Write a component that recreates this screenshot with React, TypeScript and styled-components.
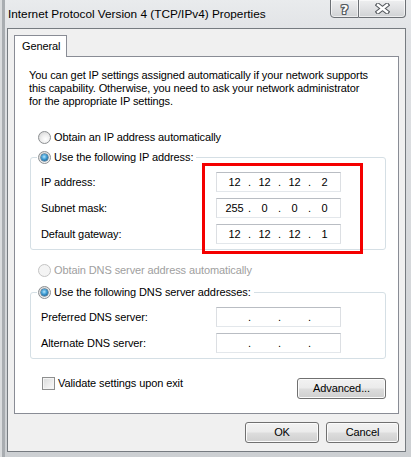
import styled, { createGlobalStyle } from "styled-components";

const GlobalStyle = createGlobalStyle`
  html, body {
    margin: 0;
    padding: 0;
  }
  body {
    font-family: "Liberation Sans", Arial, sans-serif;
    font-size: 11px;
    letter-spacing: -0.1px;
    color: #000;
  }
`;

const Window = styled.div`
  width: 411px;
  height: 457px;
  box-sizing: border-box;
  padding: 0 5px 5px 7px;
  display: flex;
  flex-direction: column;
  background: linear-gradient(180deg, #e9ebed 0px, #dfe1e4 40px, #cdd0d3 100%);
  box-shadow: inset 2px 0 0 #dadcde, inset 5px 0 0 #a9adb1;
  overflow: hidden;
`;

const TitleBar = styled.div`
  height: 28px;
  display: flex;
  align-items: flex-start;
`;

const Title = styled.div`
  padding: 7px 0 0 1px;
  font-size: 11.8px;
  line-height: 15px;
  letter-spacing: 0;
`;

const CaptionButtons = styled.div`
  margin-left: auto;
  margin-top: -1px;
  display: flex;
`;

const CaptionButton = styled.div<{ $close?: boolean }>`
  width: ${(p) => (p.$close ? 47 : 29)}px;
  height: 19px;
  box-sizing: border-box;
  border: 1px solid #6c7075;
  border-left: ${(p) => (p.$close ? "none" : "1px solid #6c7075")};
  border-radius: ${(p) => (p.$close ? "0 0 4px 0" : "0 0 0 4px")};
  background: linear-gradient(180deg, #eeeff0 0%, #e2e3e5 45%, #d0d2d4 100%);
  box-shadow: inset 0 0 0 1px rgba(255, 255, 255, 0.6);
  display: flex;
  align-items: center;
  justify-content: center;
`;

const HelpGlyph = styled.span`
  font-family: "DejaVu Sans", sans-serif;
  font-weight: bold;
  font-size: 13px;
  line-height: 13px;
  color: #fff;
  margin-top: 1px;
  text-shadow: 1px 0 0 #55595e, -1px 0 0 #55595e, 0 1px 0 #55595e, 0 -1px 0 #55595e,
    1px 1px 0 #55595e, -1px -1px 0 #55595e, 1px -1px 0 #55595e, -1px 1px 0 #55595e;
`;

const Client = styled.div`
  flex: 1;
  border: 1px solid #767b80;
  background: #f0f0f0;
  padding: 6px 6px 0 6px;
  display: flex;
  flex-direction: column;
`;

const TabStrip = styled.div`
  display: flex;
`;

const Tab = styled.div`
  height: 22px;
  box-sizing: border-box;
  border: 1px solid #898c95;
  border-bottom: none;
  background: #fff;
  padding: 0 6px 0 7px;
  line-height: 20px;
  margin-bottom: -1px;
  position: relative;
  z-index: 1;
`;

const Panel = styled.div`
  position: relative;
  width: 385px;
  height: 358px;
  box-sizing: border-box;
  border: 1px solid #898c95;
  background: #fff;
  padding: 12px 0 0 14px;
`;

const Intro = styled.p`
  margin: 0;
  line-height: 13px;
`;

const RadioRow = styled.label<{ $disabled?: boolean }>`
  display: flex;
  align-items: center;
  gap: 3px;
  line-height: 15px;
  margin: ${(p) => p.$disabled ? "13px" : "22px"} 0 0 9px;
  color: ${(p) => (p.$disabled ? "#a0a0a0" : "#000")};
`;

const Radio = styled.span<{ $checked?: boolean; $disabled?: boolean }>`
  width: 13px;
  height: 13px;
  box-sizing: border-box;
  border-radius: 50%;
  border: 1px solid ${(p) => (p.$disabled ? "#c4c4c4" : "#8c8f92")};
  background: ${(p) =>
    p.$disabled
      ? "#f4f4f4"
      : "radial-gradient(circle at 60% 65%, #ffffff 0%, #f0f0f0 40%, #cfcfcf 100%)"};
  display: flex;
  align-items: center;
  justify-content: center;
  flex-shrink: 0;
`;

const RadioDot = styled.span`
  width: 7px;
  height: 7px;
  border-radius: 50%;
  background: radial-gradient(circle at 45% 40%, #b6e6fb 0%, #3d9bd4 45%, #154f7a 90%);
  box-shadow: 0 0 0 0.5px #1d4a6b;
`;

const Group = styled.fieldset`
  margin: 5px 0 0 1px;
  width: 356px;
  box-sizing: border-box;
  border: 1px solid #d5dfe5;
  border-radius: 3px;
  padding: 0;
`;

const GroupLegend = styled.legend`
  margin-left: 6px;
  padding: 0 3px 0 1px;
  line-height: 15px;
  display: flex;
  align-items: center;
  gap: 3px;
`;

const FieldRows = styled.div`
  display: grid;
  grid-template-columns: 175px 125px;
  row-gap: 6px;
  align-items: center;
  padding: 7px 0 5px 10px;
`;

const IpField = styled.div`
  width: 125px;
  height: 20px;
  box-sizing: border-box;
  border: 1px solid;
  border-color: #b9bdc3 #dcdfe3 #e3e7eb #dcdfe3;
  background: #fff;
  display: grid;
  grid-template-columns: 27px 3px 27px 3px 27px 3px 27px;
  padding-left: 4px;
  align-items: center;
  text-align: center;
  line-height: 18px;
`;

const Octet = styled.span``;

const Dot = styled.span``;

const Highlight = styled.div`
  position: absolute;
  left: 187px;
  top: 106px;
  width: 161px;
  height: 91px;
  box-sizing: border-box;
  border: 3px solid #f40000;
  pointer-events: none;
`;

const BottomRow = styled.div`
  width: 356px;
  margin: 19px 0 0 1px;
  display: flex;
  justify-content: space-between;
  align-items: flex-start;
`;

const CheckRow = styled.label`
  display: flex;
  align-items: center;
  gap: 3px;
  line-height: 15px;
  margin: -2px 0 0 12px;
`;

const CheckBox = styled.span`
  width: 13px;
  height: 13px;
  box-sizing: border-box;
  border: 1px solid #8e8f8f;
  background: linear-gradient(135deg, #d9dadb 0%, #eeeeee 60%, #fbfbfb 100%);
  box-shadow: inset 0 0 0 1px #f4f4f4;
  flex-shrink: 0;
`;

const Button = styled.div<{ $width: number }>`
  width: ${(p) => p.$width}px;
  height: 21px;
  box-sizing: border-box;
  border: 1px solid #707070;
  border-radius: 3px;
  background: linear-gradient(180deg, #f2f2f2 0%, #ebebeb 48%, #dddddd 52%, #cfcfcf 100%);
  box-shadow: inset 0 0 0 1px #fbfbfb;
  display: flex;
  align-items: center;
  justify-content: center;
  line-height: 15px;
`;

const ButtonBar = styled.div`
  display: flex;
  justify-content: flex-end;
  gap: 7px;
  margin-top: 8px;
  width: 385px;
`;

const IpValue = ({ parts }: { parts: string[] }) => (
  <IpField>
    <Octet>{parts[0]}</Octet>
    <Dot>.</Dot>
    <Octet>{parts[1]}</Octet>
    <Dot>.</Dot>
    <Octet>{parts[2]}</Octet>
    <Dot>.</Dot>
    <Octet>{parts[3]}</Octet>
  </IpField>
);

const empty = ["", "", "", ""];

export default function App() {
  return (
    <>
      <GlobalStyle />
      <Window>
        <TitleBar>
          <Title>Internet Protocol Version 4 (TCP/IPv4) Properties</Title>
          <CaptionButtons>
            <CaptionButton>
              <HelpGlyph>?</HelpGlyph>
            </CaptionButton>
            <CaptionButton $close>
              <svg width="15" height="11" viewBox="0 0 15 11">
                <path d="M3 2 L12 9 M12 2 L3 9" stroke="#55595e" strokeWidth="4.6" strokeLinecap="square" />
                <path d="M3 2 L12 9 M12 2 L3 9" stroke="#fff" strokeWidth="2.4" strokeLinecap="square" />
              </svg>
            </CaptionButton>
          </CaptionButtons>
        </TitleBar>
        <Client>
          <TabStrip>
            <Tab>General</Tab>
          </TabStrip>
          <Panel>
            <Intro>
              You can get IP settings assigned automatically if your network supports
              <br />
              this capability. Otherwise, you need to ask your network administrator
              <br />
              for the appropriate IP settings.
            </Intro>

            <RadioRow>
              <Radio />
              Obtain an IP address automatically
            </RadioRow>
            <Group>
              <GroupLegend>
                <Radio $checked>
                  <RadioDot />
                </Radio>
                Use the following IP address:
              </GroupLegend>
              <FieldRows>
                <span>IP address:</span>
                <IpValue parts={["12", "12", "12", "2"]} />
                <span>Subnet mask:</span>
                <IpValue parts={["255", "0", "0", "0"]} />
                <span>Default gateway:</span>
                <IpValue parts={["12", "12", "12", "1"]} />
              </FieldRows>
            </Group>

            <RadioRow $disabled>
              <Radio $disabled />
              Obtain DNS server address automatically
            </RadioRow>
            <Group style={{ marginTop: 7 }}>
              <GroupLegend>
                <Radio $checked>
                  <RadioDot />
                </Radio>
                Use the following DNS server addresses:
              </GroupLegend>
              <FieldRows>
                <span>Preferred DNS server:</span>
                <IpValue parts={empty} />
                <span>Alternate DNS server:</span>
                <IpValue parts={empty} />
              </FieldRows>
            </Group>

            <BottomRow>
              <CheckRow>
                <CheckBox />
                Validate settings upon exit
              </CheckRow>
              <Button $width={89}>Advanced...</Button>
            </BottomRow>

            <Highlight />
          </Panel>
          <ButtonBar>
            <Button $width={74}>OK</Button>
            <Button $width={73}>Cancel</Button>
          </ButtonBar>
        </Client>
      </Window>
    </>
  );
}
